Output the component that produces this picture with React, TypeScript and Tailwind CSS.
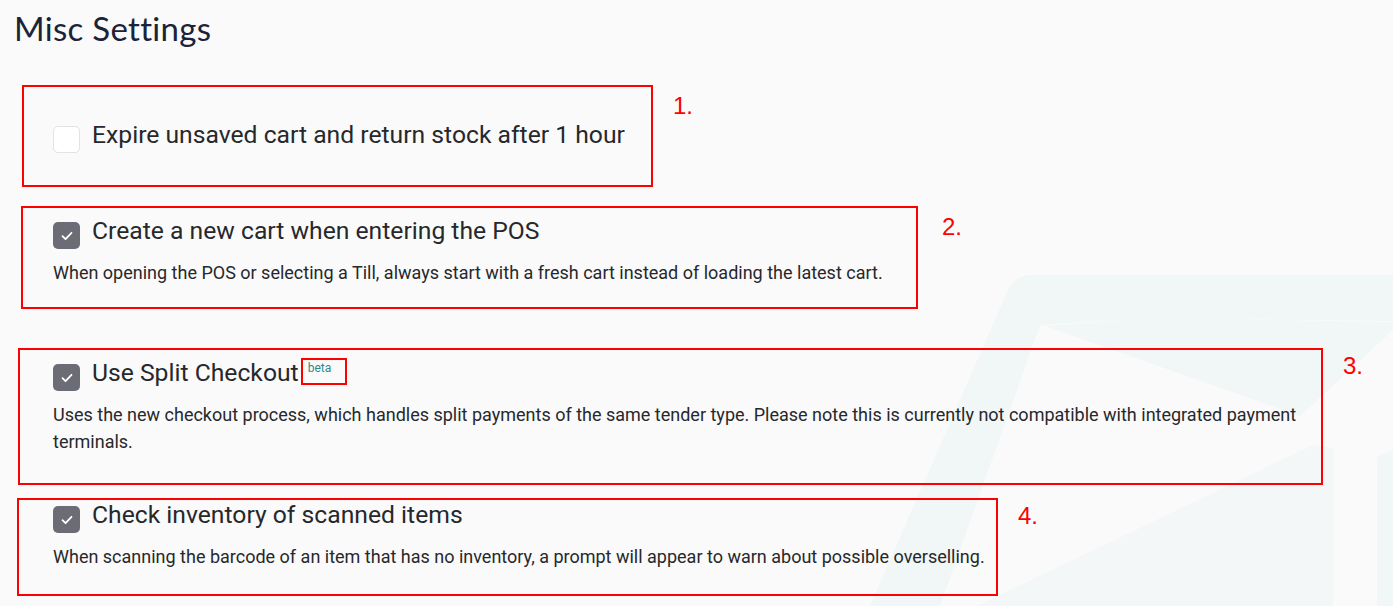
import React from 'react';

type Setting = {
  title: string;
  desc?: string;
  checked: boolean;
  beta?: boolean;
  num: string;
  // annotation box geometry, all px
  boxLeft: string;
  boxSize: string;
  pad: string;
  gapTop: string;
  numGap: string;
  numTop: string;
};

const settings: Setting[] = [
  {
    title: 'Expire unsaved cart and return stock after 1 hour',
    checked: false,
    num: '1.',
    boxLeft: 'ml-[22px]',
    boxSize: 'w-[631px] h-[102px]',
    pad: 'pl-[29px] pt-[34px]',
    gapTop: 'mt-[38px]',
    numGap: 'ml-[20px]',
    numTop: 'mt-[7px]',
  },
  {
    title: 'Create a new cart when entering the POS',
    desc: 'When opening the POS or selecting a Till, always start with a fresh cart instead of loading the latest cart.',
    checked: true,
    num: '2.',
    boxLeft: 'ml-[21px]',
    boxSize: 'w-[897px] h-[103px]',
    pad: 'pl-[30px] pt-[9px]',
    gapTop: 'mt-[19px]',
    numGap: 'ml-[24px]',
    numTop: 'mt-[7px]',
  },
  {
    title: 'Use Split Checkout',
    desc: 'Uses the new checkout process, which handles split payments of the same tender type. Please note this is currently not compatible with integrated payment terminals.',
    checked: true,
    beta: true,
    num: '3.',
    boxLeft: 'ml-[18px]',
    boxSize: 'w-[1305px] h-[137px]',
    pad: 'pl-[33px] pr-[6px] pt-[9px]',
    gapTop: 'mt-[39px]',
    numGap: 'ml-[20px]',
    numTop: 'mt-[4px]',
  },
  {
    title: 'Check inventory of scanned items',
    desc: 'When scanning the barcode of an item that has no inventory, a prompt will appear to warn about possible overselling.',
    checked: true,
    num: '4.',
    boxLeft: 'ml-[17px]',
    boxSize: 'w-[981px] h-[98px]',
    pad: 'pl-[34px] pt-[1px]',
    gapTop: 'mt-[13px]',
    numGap: 'ml-[20px]',
    numTop: 'mt-[4px]',
  },
];

function Checkbox({ checked }: { checked: boolean }) {
  return checked ? (
    <div className="mt-[5px] w-[27px] h-[27px] shrink-0 rounded-[5px] bg-[#6c6c77] flex items-center justify-center">
      <svg width="12" height="10" viewBox="0 0 12 10" fill="none">
        <path d="M1.5 5.2l3 3 6-6.4" stroke="#fff" strokeWidth="1.8" strokeLinecap="round" strokeLinejoin="round" />
      </svg>
    </div>
  ) : (
    <div className="mt-[5px] w-[27px] h-[27px] shrink-0 rounded-[5px] bg-white border border-[#e3e3e3]" />
  );
}

function Watermark() {
  return (
    <svg className="absolute top-0 left-0" width="1393" height="606" viewBox="0 0 1393 606" fill="#f1f6f6">
      <path d="M1032 275 L1393 275 L1393 321 L1150 318 L1040 325 L940 606 L870 606 L1008 290 Q1015 275 1032 275 Z" />
      <path d="M1150 318 L1393 322 L1393 330 L1300 416 L1045 326 Z" />
      <path d="M977 606 L1313 445 L1333 448 L1333 606 L1040 606 Z" opacity="0.8" />
      <path d="M1377 457 L1393 450 L1393 606 L1377 606 Z" />
    </svg>
  );
}

export default function App() {
  return (
    <div className="relative min-h-[606px] bg-[#fafafa] overflow-hidden">
      <Watermark />
      <div className="relative pt-[9px] pb-[10px]">
        <h1 className="pl-[14px] text-[33px] leading-[38px] tracking-[0.3px] text-[#1b2338] font-normal font-['Lato',sans-serif]">
          Misc Settings
        </h1>
        <div className="flex flex-col font-['Roboto',sans-serif] text-[#26282c]">
          {settings.map(s => (
            <div key={s.num} className={`flex items-start ${s.gapTop}`}>
              <div className={`${s.boxLeft} ${s.boxSize} ${s.pad} shrink-0 border-2 border-[#ff0000]`}>
                <div className="flex items-start gap-[12px]">
                  <Checkbox checked={s.checked} />
                  <div className="flex items-start">
                    <span className="text-[24.7px] leading-[28px]">{s.title}</span>
                    {s.beta && (
                      <span className="-mt-px ml-[2px] w-[46px] h-[27px] border-2 border-[#ff0000] pl-[5px] pt-[1px] text-[12px] leading-[14px] text-[#2a8a8c]">
                        beta
                      </span>
                    )}
                  </div>
                </div>
                {s.desc && (
                  <p className="mt-[10px] text-[18px] leading-[27px]">{s.desc}</p>
                )}
              </div>
              <span className={`${s.numGap} ${s.numTop} text-[24px] leading-[27px] text-[#ff0000] font-['Liberation_Sans',sans-serif]`}>
                {s.num}
              </span>
            </div>
          ))}
        </div>
      </div>
    </div>
  );
}
